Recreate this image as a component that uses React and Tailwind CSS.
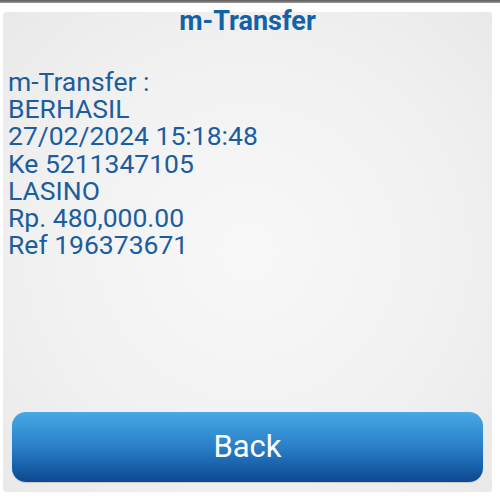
import React from "react";

// m-Transfer result screen
const lines = [
  "m-Transfer :",
  "BERHASIL",
  "27/02/2024 15:18:48",
  "Ke 5211347105",
  "LASINO",
  "Rp. 480,000.00",
  "Ref 196373671",
];

export default function App() {
  return (
    <div
      className="w-[500px] h-[500px] bg-white flex flex-col overflow-hidden"
      style={{ fontFamily: "Roboto, 'Liberation Sans', sans-serif" }}
    >
      {/* status strip at the very top */}
      <div className="h-[3px] bg-gradient-to-b from-[#5a5a5a] to-[#9a9a9a]" />

      <div className="flex-1 pl-[3px] pr-[8px] pt-[9px] pb-[8px]">
        <div className="h-full rounded-[3px] bg-[radial-gradient(ellipse_at_center,#f8f8f8_0%,#f1f1f1_60%,#e9e9e9_100%)] flex flex-col">
          <h1 className="text-center text-[27px] leading-[18px] font-bold text-[#1262a9] mt-[0px]">
            m-Transfer
          </h1>

          <div className="mt-[38px] pl-[5px] text-[26.5px] leading-[27.2px] text-[#1b5d9d]">
            {lines.map((l) => (
              <div key={l}>{l}</div>
            ))}
          </div>

          <div className="flex-1" />

          <div className="px-[9px] pb-[10px]">
            <button className="w-full h-[70px] rounded-[14px] bg-gradient-to-b from-[#47a9e6] via-[#2a7fc7] to-[#0b4890] text-white text-[31px] flex items-center justify-center shadow-[0_1px_1px_rgba(0,0,0,0.15)]">
              Back
            </button>
          </div>
        </div>
      </div>
    </div>
  );
}
